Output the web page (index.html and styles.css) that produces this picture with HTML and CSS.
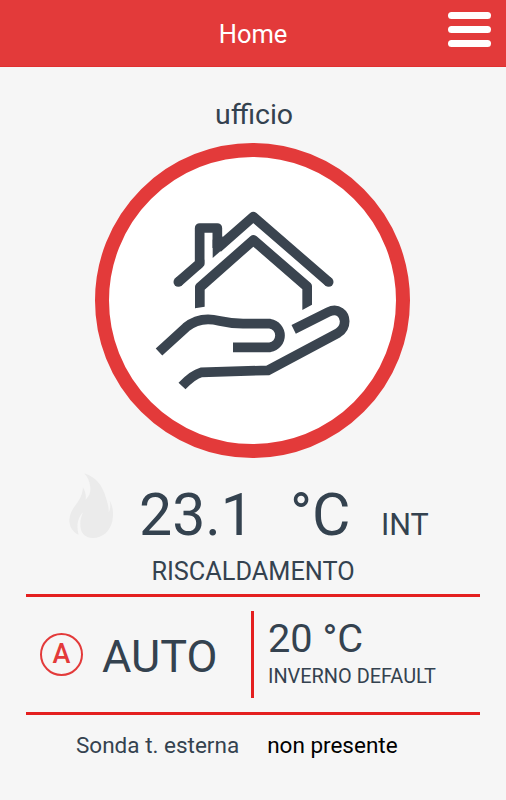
FILE: index.html
```html
<!DOCTYPE html>
<html lang="it">
<head>
    <meta charset="UTF-8">
    <meta name="viewport" content="width=device-width, initial-scale=1.0">
    <title>Home</title>
    <link rel="stylesheet" href="styles.css">
</head>
<body>
    <header class="header">
        <h1 class="header-title">Home</h1>
        <button class="menu-button" aria-label="Menu">
            <span></span>
            <span></span>
            <span></span>
        </button>
    </header>

    <main class="container">
        <h2 class="room-name">ufficio</h2>

        <div class="room-circle">
            <svg class="room-icon" viewBox="16 10 945 945">
                <!-- roof and chimney -->
                <g fill="none" stroke="#3a444f" stroke-width="29" stroke-linejoin="round">
                    <path d="M266 427L330 371V265H383V325" stroke-linecap="butt"/>
                    <path d="M384 325L491 231L717 427"/>
                </g>
                <circle cx="266" cy="427" r="14.5" fill="#3a444f"/>
                <circle cx="717" cy="427" r="14.5" fill="#3a444f"/>
                <path d="M369 300V355L410 319L398 290Z" fill="#3a444f"/>
                <path d="M330 390L344 377V360H325Z" fill="#3a444f"/>
                <!-- walls -->
                <path d="M316 506V441Q316 436 320 432L482 290Q491 282 501 290L663 430Q667 434 667 439V495L638 511V449L491 321L345 450V501Z" fill="#3a444f"/>
                <!-- hand -->
                <g fill="none" stroke="#3a444f" stroke-width="29">
                    <path d="M208 637L289 563Q318 539 355 539C390 539 395 551 460 552H541A36 36 0 0 1 541 623H430"/>
                    <path d="M612 569L716 517C745 503 765 523 765 545C765 562 758 572 745 580L535 692L335 698C320 702 300 715 277 739"/>
                </g>
            </svg>
        </div>

        <div class="temperature">
            <svg class="flame" viewBox="58 22 136 200">
                <path d="M104 23C142 36 160 62 170 98C176 118 179 128 178 142C184 130 184 118 181 105C191 122 194 145 189 168C182 198 160 219 130 219C105 219 92 202 92 178C92 162 96 152 100 142C85 156 79 182 87 209C68 200 58 182 59 163C62 122 98 112 100 65C108 78 110 90 108 103C122 90 124 76 122 62C120 46 114 34 104 23Z" fill="#ebebeb"/>
            </svg>
            <span class="temperature-value">23.1</span>
            <span class="temperature-unit">°C</span>
            <span class="temperature-place">INT</span>
        </div>
        <p class="season">RISCALDAMENTO</p>

        <section class="program">
            <div class="mode">
                <span class="mode-icon">A</span>
                <span class="mode-name">AUTO</span>
            </div>
            <div class="setpoint">
                <div class="setpoint-value">20 °C</div>
                <div class="setpoint-name">INVERNO DEFAULT</div>
            </div>
        </section>

        <div class="probe">
            <span class="probe-label">Sonda t. esterna</span>
            <span class="probe-value">non presente</span>
        </div>
    </main>
</body>
</html>
```
FILE: styles.css
```css
* {
    box-sizing: border-box;
}
body {
    font-family: Roboto, Arial, sans-serif;
    margin: 0;
    padding: 0;
    background-color: #f6f6f6;
    color: #34424f;
}
.header {
    display: grid;
    grid-template-columns: 58px 1fr 58px;
    align-items: center;
    height: 67px;
    border-bottom: 1px solid #e03030;
    background-color: #e33a3a;
    color: white;
}
.header-title {
    grid-column: 2;
    margin: 2px 0 0;
    font-size: 25.5px;
    font-weight: 400;
    line-height: 30px;
    text-align: center;
}
.menu-button {
    display: flex;
    flex-direction: column;
    gap: 7px;
    width: 43px;
    margin: 0 0 7px;
    padding: 0;
    border: none;
    background: none;
}
.menu-button span {
    height: 7px;
    border-radius: 4px;
    background-color: white;
}
.container {
    padding: 31px 26px 0;
}
.room-name {
    margin: 0;
    padding-left: 2px;
    font-size: 28.5px;
    font-weight: 400;
    line-height: 34px;
    text-align: center;
}
.room-circle {
    width: 315px;
    height: 315px;
    margin: 11px 0 0 69px;
    border: 14px solid #e33a3a;
    border-radius: 50%;
    background-color: white;
}
.room-icon {
    display: block;
    width: 315px;
    height: 315px;
    margin: -14px;
}
.temperature {
    display: flex;
    align-items: baseline;
    height: 71px;
    margin-top: 15px;
    padding-left: 43px;
    line-height: 84px;
}
.flame {
    width: 45px;
    height: 66px;
    align-self: flex-start;
    margin-right: 25px;
}
.temperature-value {
    width: 151px;
    font-size: 59px;
}
.temperature-unit {
    width: 91px;
    font-size: 59px;
}
.temperature-place {
    font-size: 30.5px;
}
.season {
    margin: 13px 0 7px;
    font-size: 25.3px;
    line-height: 30px;
    text-align: center;
}
.program {
    display: flex;
    align-items: center;
    height: 121px;
    border-top: 3px solid #e41f1f;
    border-bottom: 3px solid #e41f1f;
}
.mode {
    display: flex;
    align-items: center;
    gap: 19px;
    width: 228px;
    height: 87px;
    padding-left: 14px;
    border-right: 3px solid #e41f1f;
}
.mode-icon {
    width: 43px;
    height: 43px;
    border: 2.5px solid #e33a3a;
    border-radius: 50%;
    color: #e33a3a;
    font-size: 27px;
    font-weight: 500;
    line-height: 39px;
    text-align: center;
}
.mode-name {
    padding-top: 3px;
    font-size: 45px;
}
.setpoint {
    padding: 0 0 4px 14px;
}
.setpoint-value {
    font-size: 39.7px;
    line-height: 47px;
}
.setpoint-name {
    font-size: 19.9px;
    line-height: 29px;
}
.probe {
    display: flex;
    gap: 28px;
    padding: 16px 0 0 50px;
    font-size: 22.5px;
    line-height: 28px;
}
.probe-value {
    color: black;
}
```
